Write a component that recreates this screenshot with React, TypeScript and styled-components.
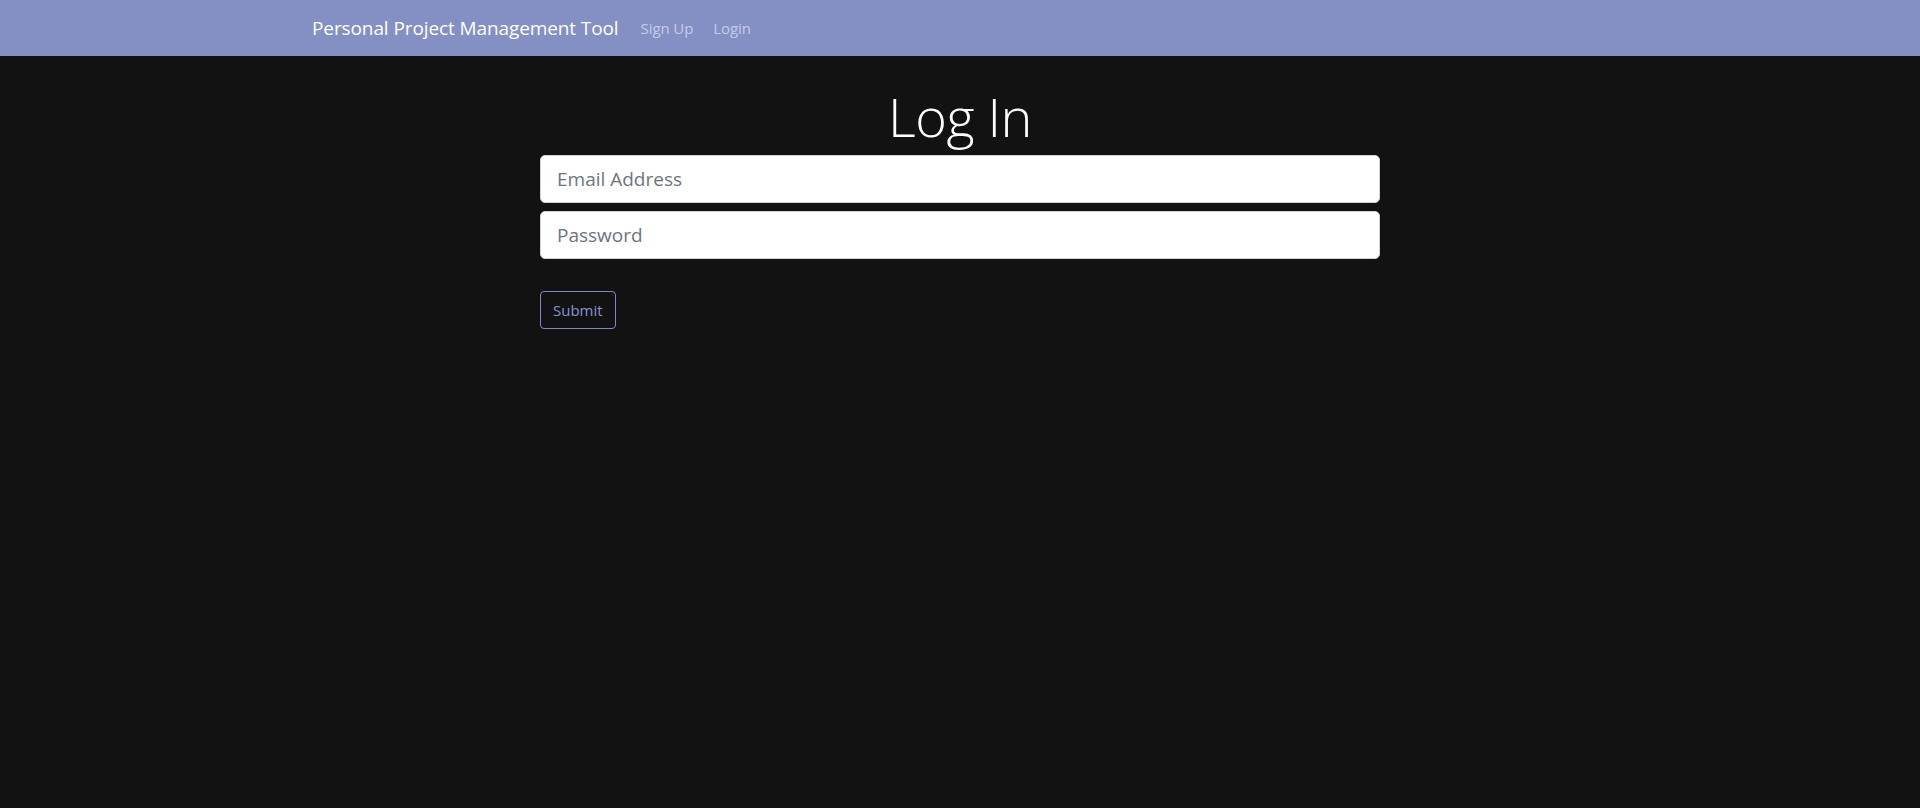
import React from "react";
import styled, { createGlobalStyle } from "styled-components";

const Global = createGlobalStyle`
  html, body { margin: 0; padding: 0; background: #121212; }
  body {
    font-family: "Open Sans", "Noto Sans", "Liberation Sans", sans-serif;
    font-size: 16px;
    line-height: 1.5;
    color: #ffffff;
  }
  * { box-sizing: border-box; }
`;

const Page = styled.div`
  min-height: 808px;
  background: #121212;
`;

const NavBar = styled.nav`
  height: 56px;
  background: #8490c4;
  display: flex;
  align-items: center;
`;

const NavInner = styled.div`
  width: 1320px;
  margin: 0 auto;
  padding: 0 12px;
  display: flex;
  align-items: center;
`;

const Brand = styled.a`
  font-size: 19px;
  color: #ffffff;
  text-decoration: none;
  margin-right: 12px;
  line-height: 30px;
  letter-spacing: -0.1px;
`;

const NavLinks = styled.div`
  display: flex;
`;

const NavLink = styled.a`
  font-size: 15px;
  color: rgba(255, 255, 255, 0.55);
  text-decoration: none;
  padding: 8px 10px;
  letter-spacing: -0.1px;
`;

const Main = styled.main`
  width: 840px;
  margin: 0 auto;
  display: flex;
  flex-direction: column;
`;

const Title = styled.h1`
  margin: 28px 0 6px;
  font-size: 54px;
  font-weight: 300;
  line-height: 1.2;
  text-align: center;
  color: #ffffff;
  letter-spacing: -0.5px;
`;

const Form = styled.form`
  display: flex;
  flex-direction: column;
  gap: 8px;
`;

const Input = styled.input`
  width: 100%;
  height: 48px;
  padding: 8px 16px;
  font-family: inherit;
  font-size: 19px;
  color: #212529;
  background: #ffffff;
  border: 1px solid #ced4da;
  border-radius: 5px;
  outline: none;
  &::placeholder { color: #6c757d; }
`;

const SubmitButton = styled.button`
  align-self: flex-start;
  margin-top: 24px;
  height: 38px;
  padding: 0 12px;
  font-family: inherit;
  font-size: 15px;
  color: #8592d6;
  background: transparent;
  border: 1px solid #7d88c8;
  border-radius: 4px;
  cursor: pointer;
`;

export default function App() {
  return (
    <Page>
      <Global />
      <NavBar>
        <NavInner>
          <Brand href="#">Personal Project Management Tool</Brand>
          <NavLinks>
            <NavLink href="#">Sign Up</NavLink>
            <NavLink href="#">Login</NavLink>
          </NavLinks>
        </NavInner>
      </NavBar>
      <Main>
        <Title>Log In</Title>
        <Form onSubmit={(e) => e.preventDefault()}>
          <Input type="email" placeholder="Email Address" />
          <Input type="password" placeholder="Password" />
          <SubmitButton type="submit">Submit</SubmitButton>
        </Form>
      </Main>
    </Page>
  );
}
